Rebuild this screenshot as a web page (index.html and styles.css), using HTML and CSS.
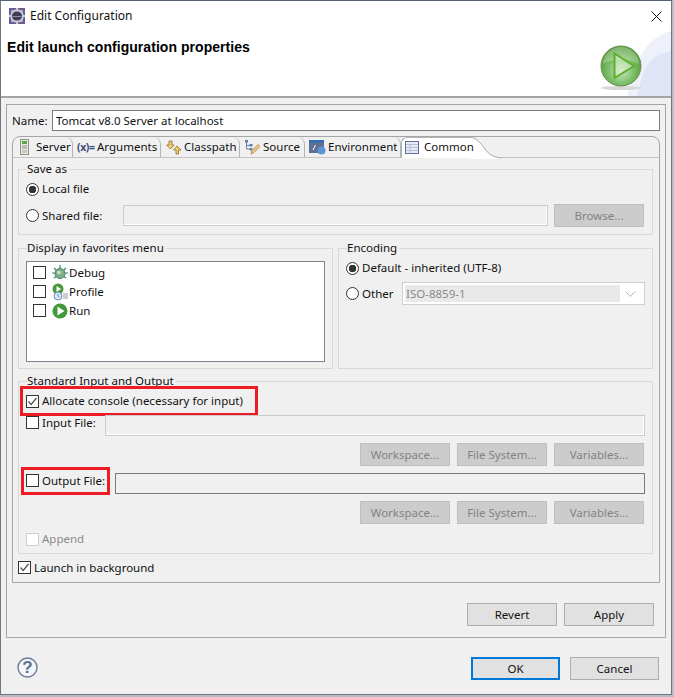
FILE: index.html
```html
<!DOCTYPE html>
<html lang="en">
<head>
<meta charset="utf-8">
<title>Edit Configuration</title>
<link rel="stylesheet" href="styles.css">
</head>
<body>
<svg class="defs" width="0" height="0" aria-hidden="true">
  <defs>
    <radialGradient id="orb" cx="50%" cy="62%" r="58%">
      <stop offset="0" stop-color="#cfe8c4"/>
      <stop offset=".55" stop-color="#7dc06a"/>
      <stop offset="1" stop-color="#4f9a35"/>
    </radialGradient>
    <symbol id="check" viewBox="0 0 13 13">
      <path d="M2.500 6.500 5.200 9.500 10.500 3" fill="none" stroke="#555" stroke-width="1.300"/>
    </symbol>
  </defs>
</svg>
<div class="window">
  <header class="header">
    <svg class="header-art" width="60" height="67" viewBox="0 0 60 67" aria-hidden="true">
      <path d="M60 2C44 6 34 18 28 30 24 42 20 56 16 67H60Z" fill="#eef1fa"/>
      <path d="M60 22C48 24 40 30 34 40 30 50 28 58 26 67H60Z" fill="#dfe5f6"/>
    </svg>
    <svg class="header-orb" width="44" height="48" viewBox="0 0 44 48" aria-hidden="true">
      <ellipse cx="22" cy="44" rx="20" ry="2" fill="#d8d8d8"/>
      <circle cx="22" cy="22" r="20" fill="url(#orb)" stroke="#6d8f50" stroke-width="1"/>
      <path d="M4 20A18 17 0 0 1 40 20C30 14 14 14 4 20Z" fill="#ffffff" opacity=".28"/>
      <path d="M15.500 9.500 35 22 15.500 34Z" fill="#dcf0d0" fill-opacity=".55" stroke="#5fae2c" stroke-width="2"/>
    </svg>
    <div class="titlebar">
      <svg class="app-icon" width="16" height="16" viewBox="0 0 16 16" aria-hidden="true">
        <rect width="16" height="16" fill="#6a5a96"/>
        <circle cx="8" cy="8" r="6.800" fill="#c9c9d2"/>
        <path d="M8 0v3M8 13v3M0 8h3M13 8h3M2.500 2.500l2 2M11.500 11.500l2 2M13.500 2.500l-2 2M4.500 11.500l-2 2" stroke="#c9c9d2" stroke-width="2"/>
        <ellipse cx="8" cy="8" rx="5" ry="4.600" fill="#3f3a56"/>
        <path d="M3.500 8.500h9" stroke="#8f8aa8" stroke-width="1"/>
      </svg>
      <span class="title">Edit Configuration</span>
      <svg class="close" width="11" height="11" viewBox="0 0 11 11" aria-hidden="true">
        <path d="M.5.500l10 10M10.500.500l-10 10" stroke="#111" stroke-width="1"/>
      </svg>
    </div>
    <h1 class="heading">Edit launch configuration properties</h1>
  </header>

  <main class="box">
    <div class="name-row">
      <label class="name-label">Name:</label>
      <div class="field field-name">Tomcat v8.0 Server at localhost</div>
    </div>

    <section class="folder">
      <nav class="tabs">
        <div class="tab tab-server">
          <svg width="9" height="16" viewBox="0 0 9 16" aria-hidden="true">
            <rect x=".5" y=".5" width="8" height="15" fill="#e6e8e0" stroke="#8d9488"/>
            <rect x="2" y="2" width="5" height="3" fill="#5aa845"/>
            <path d="M2 7h5M2 9h5" stroke="#8d9488"/>
            <rect x="2" y="11" width="5" height="3" fill="#c8ccc0"/>
          </svg>
          <span>Server</span>
        </div>
        <div class="tab tab-args"><b class="var-icon">(x)=</b><span>Arguments</span></div>
        <div class="tab tab-class">
          <svg width="16" height="15" viewBox="0 0 16 15" aria-hidden="true">
            <path d="M4 1h3v4h2L5.500 9 1.500 5h2.500Z" fill="#f3cf6a" stroke="#8a7030" stroke-width=".8"/>
            <path d="M11 14V10H8.500L12 6l4 4h-2.500v4Z" fill="#f3cf6a" stroke="#8a7030" stroke-width=".8"/>
          </svg>
          <span>Classpath</span>
        </div>
        <div class="tab tab-source">
          <svg width="16" height="16" viewBox="0 0 16 16" aria-hidden="true">
            <path d="M2.500 3v7h3M2.500 6.500h3" fill="none" stroke="#6a7fa8"/>
            <path d="M1 1h3v2.500H1ZM5.500 5h3v2.500h-3ZM5.500 9h3v2.500h-3Z" fill="#5f7fb5"/>
            <path d="M7 15l1-3.500L14 5.500l2 2L10 13.500Z" fill="#e8c98a" stroke="#a8833c" stroke-width=".8"/>
          </svg>
          <span>Source</span>
        </div>
        <div class="tab tab-env">
          <svg width="17" height="15" viewBox="0 0 17 15" aria-hidden="true">
            <rect width="15" height="13" fill="#5c7193"/>
            <rect y="0" width="15" height="2.500" fill="#2f6db5"/>
            <path d="M4 10l2.500-5" stroke="#fff"/>
            <circle cx="12.500" cy="10.500" r="4" fill="#5d94d4"/>
          </svg>
          <span>Environment</span>
        </div>
        <div class="tab tab-common">
          <svg width="14" height="13" viewBox="0 0 14 13" aria-hidden="true">
            <rect x=".5" y=".5" width="13" height="12" fill="#e8eaf4" stroke="#5c6f97"/>
            <path d="M1 3.500h12M1 6.500h12M1 9.500h12M5 3.500v9" stroke="#b8c0d8"/>
          </svg>
          <span class="tab-label">Common</span>
          <svg class="tab-curve" width="31" height="22" viewBox="0 0 31 22" aria-hidden="true">
            <path d="M0 0C6 0 10 5 15 12 19 18 24 20 31 21V22H0Z" fill="#fff"/>
            <path d="M0 .5C6 .5 10 5 15 12 19 18 24 20 31 21" fill="none" stroke="#a8a8a8"/>
          </svg>
        </div>
      </nav>

      <div class="panel">
        <div class="group group-save">
          <span class="legend">Save as</span>
          <div class="row row-local">
            <span class="opt"><i class="radio on"></i>Local file</span>
          </div>
          <div class="row row-shared">
            <span class="opt opt-shared"><i class="radio"></i>Shared file:</span>
            <div class="field disabled grow"></div>
            <button class="btn off">Browse...</button>
          </div>
        </div>

        <div class="columns">
          <div class="group group-half">
            <span class="legend">Display in favorites menu</span>
            <div class="list">
              <div class="list-row">
                <i class="check"></i>
                <svg width="16" height="16" viewBox="0 0 16 16" aria-hidden="true">
                  <path d="M2 3l3 3M14 3l-3 3M0 8h3M13 8h3M2 13l3-2M14 13l-3-2M8 0v3" stroke="#3f7f6a" stroke-width="1.200"/>
                  <circle cx="8" cy="8.500" r="5" fill="#7fb08c" stroke="#3f7f6a"/>
                  <circle cx="7" cy="7.500" r="1.800" fill="#cfe6c8"/>
                </svg>
                <span>Debug</span>
              </div>
              <div class="list-row">
                <i class="check"></i>
                <svg width="16" height="18" viewBox="0 0 16 18" aria-hidden="true">
                  <circle cx="6" cy="6" r="5.500" fill="#4a9a3c"/>
                  <path d="M4.500 3 9 6 4.500 9Z" fill="#fff"/>
                  <circle cx="6" cy="13" r="4" fill="#dbe6f5" stroke="#6a8fc0"/>
                  <path d="M6 11v2l1.500 1" stroke="#6a8fc0" fill="none"/>
                  <path d="M11 11h5M11 13h5M11 15h5" stroke="#8f9fb5"/>
                </svg>
                <span>Profile</span>
              </div>
              <div class="list-row">
                <i class="check"></i>
                <svg width="16" height="16" viewBox="0 0 16 16" aria-hidden="true">
                  <circle cx="8" cy="8" r="7.500" fill="#3f9a3a"/>
                  <path d="M5.500 3.500 12.500 8 5.500 12.500Z" fill="#fff"/>
                </svg>
                <span>Run</span>
              </div>
            </div>
          </div>

          <div class="group group-half">
            <span class="legend">Encoding</span>
            <div class="row row-local">
              <span class="opt"><i class="radio on"></i>Default - inherited (UTF-8)</span>
            </div>
            <div class="row row-other">
              <span class="opt opt-other"><i class="radio"></i>Other</span>
              <div class="select">
                <span class="select-value">ISO-8859-1</span>
                <svg width="11" height="6" viewBox="0 0 11 6" aria-hidden="true">
                  <path d="M.5.500 5.500 5.500 10.500.500" fill="none" stroke="#b0b0b0"/>
                </svg>
              </div>
            </div>
          </div>
        </div>

        <div class="group group-io">
          <span class="legend">Standard Input and Output</span>
          <div class="row row-local">
            <span class="opt"><i class="check"><svg width="13" height="13"><use href="#check"/></svg></i>Allocate console (necessary for input)</span>
            <span class="mark mark-alloc"></span>
          </div>
          <div class="row row-file row-input">
            <span class="opt opt-input"><i class="check"></i>Input File:</span>
            <div class="field disabled grow"></div>
          </div>
          <div class="btn-row">
            <button class="btn off">Workspace...</button>
            <button class="btn off">File System...</button>
            <button class="btn off">Variables...</button>
          </div>
          <div class="row row-file row-output">
            <span class="opt opt-output"><i class="check"></i>Output File:</span>
            <span class="mark mark-out"></span>
            <div class="field dark grow"></div>
          </div>
          <div class="btn-row">
            <button class="btn off">Workspace...</button>
            <button class="btn off">File System...</button>
            <button class="btn off">Variables...</button>
          </div>
          <div class="row row-append">
            <span class="opt muted"><i class="check faint"></i>Append</span>
          </div>
        </div>

        <div class="row row-launch">
          <span class="opt"><i class="check"><svg width="13" height="13"><use href="#check"/></svg></i>Launch in background</span>
        </div>
      </div>
    </section>

    <div class="actions">
      <button class="btn">Revert</button>
      <button class="btn">Apply</button>
    </div>
  </main>

  <footer class="footer">
    <svg class="help" width="21" height="21" viewBox="0 0 21 21" aria-hidden="true">
      <circle cx="10.500" cy="10.500" r="9.500" fill="#f4f5f8" stroke="#6b7a99" stroke-width="1.400"/>
    </svg>
    <span class="help-mark">?</span>
    <button class="btn wide primary">OK</button>
    <button class="btn wide">Cancel</button>
  </footer>
</div>
</body>
</html>
```

FILE: styles.css
```css
* { box-sizing: border-box; }
html, body { margin: 0; padding: 0; }
body {
  width: 674px;
  height: 697px;
  overflow: hidden;
  background: #b9bdc3;
  font-family: "Noto Sans", "Liberation Sans", sans-serif;
  font-size: 11.5px;
  line-height: 16px;
  color: #111;
}
.defs { position: absolute; }
.window {
  width: 672px;
  height: 695px;
  background: #f0f0f0;
  border: 1px solid #6f7780;
  border-top-color: #566270;
}
.header {
  position: relative;
  height: 97px;
  background: #fff;
  border-bottom: 2px solid #a4a4a4;
}
.header-art { position: absolute; right: 0; bottom: 0; }
.header-orb { position: absolute; right: 28px; top: 43px; }
.titlebar {
  display: flex;
  align-items: center;
  height: 30px;
  padding: 0 9px 0 8px;
}
.app-icon { flex: none; }
.title { margin-left: 5px; flex: 1; font-size: 12px; }
.close { flex: none; }
.heading {
  margin: 7px 0 0 6px;
  font-size: 14px;
  line-height: 18px;
  font-weight: 700;
  letter-spacing: .05px;
  color: #000;
  font-family: "Liberation Sans", sans-serif;
}

.box {
  width: 660px;
  height: 534px;
  margin: 6px 0 0 5px;
  padding: 5px 5px 0;
  border: 1px solid #a6a6a6;
}
.name-row { display: flex; align-items: center; height: 21px; }
.name-label { width: 40px; }
.field {
  background: #fff;
  border: 1px solid #7a7a7a;
  height: 21px;
  line-height: 19px;
  padding-left: 3px;
}
.field-name { width: 608px; }
.field.disabled {
  background: #f0f0f0;
  border-color: #cbcbcb;
  box-shadow: inset -1px -1px 0 #fff;
}
.field.dark { background: #f0f0f0; }
.grow { flex: 1; }

.folder {
  width: 648px;
  height: 447px;
  margin-top: 5px;
  border: 1px solid #a6a6a6;
  border-top-left-radius: 8px;
  border-top-right-radius: 8px;
}
.tabs {
  display: flex;
  height: 21px;
  border-bottom: 1px solid #c4c4c4;
}
.tab {
  display: flex;
  flex: none;
  align-items: center;
  height: 20px;
  border-right: 1px solid #b4b4b4;
  border-top-right-radius: 7px;
}
.tab svg { flex: none; }
.tab-server { width: 60px; padding-left: 7px; gap: 7px; }
.tab-args { width: 88px; padding-left: 4px; gap: 3px; }
.tab-class { width: 79px; padding-left: 4px; gap: 3px; }
.tab-source { width: 65px; padding-left: 4px; gap: 3px; }
.tab-env { width: 96px; padding-left: 4px; gap: 2px; }
.tab-common {
  position: relative;
  width: 69px;
  height: 21px;
  margin-bottom: -1px;
  padding: 0 0 2px 3px;
  gap: 5px;
  background: #fff;
  border-right: 0;
  border-top-right-radius: 0;
  border-top-left-radius: 6px;
  border-left: 1px solid #b4b4b4;
  border-top: 1px solid #b4b4b4;
}
.tab-label { position: relative; z-index: 1; }
.tab-curve { position: absolute; left: 68px; top: -1px; }
.var-icon { width: 17px; font-size: 10.5px; color: #3a4a78; letter-spacing: -.4px; white-space: nowrap; }

.panel { padding: 11px 6px 0 5px; }
.group {
  border: 1px solid #d9d9d9;
  padding: 0 8px 0 7px;
}
.legend {
  display: table;
  height: 16px;
  margin: -9px 0 0 1px;
  padding: 0 2px 0 0;
  background: #f0f0f0;
}
.group-save { height: 66px; }
.columns { display: flex; gap: 5px; margin-top: 13px; }
.group-half { width: 315px; height: 121px; }
.group-io { height: 173px; margin-top: 12px; padding-right: 7px; }

.row { position: relative; display: flex; align-items: center; }
.row-local { height: 20px; margin-top: 2px; }
.row-shared { height: 23px; margin-top: 5px; }
.row-shared .btn { margin-left: 6px; }
.row-other { height: 23px; margin-top: 4px; }
.row-file { align-items: flex-start; margin-top: 4px; }
.row-output { margin-top: 7px; }
.row-append { height: 18px; margin-top: 6px; }
.row-launch { height: 17px; margin-top: 5px; }

.opt { display: flex; flex: none; align-items: center; gap: 3px; white-space: nowrap; height: 15px; }
.opt-shared { width: 97px; }
.opt-other { width: 56px; }
.opt-input { width: 79px; }
.opt-output { width: 89px; }
.muted { color: #8a8a8a; }

.radio {
  flex: none;
  width: 13px;
  height: 13px;
  border: 1px solid #333;
  border-radius: 50%;
  background: #fff;
}
.radio.on { background: radial-gradient(circle, #333 0 3.5px, #fff 4px); }
.check {
  flex: none;
  display: block;
  width: 13px;
  height: 13px;
  border: 1px solid #333;
  background: #fff;
  font-style: normal;
}
.check svg { display: block; margin: -1px; }
.check.faint { border-color: #cfcfcf; }

.mark { position: absolute; border: 3px solid #ed1c24; pointer-events: none; }
.mark-alloc { left: -6px; top: -5px; width: 238px; height: 30px; }
.mark-out { left: -5px; top: -6px; width: 89px; height: 28px; }

.list {
  width: 299px;
  height: 101px;
  margin-top: 5px;
  padding: 1px 0 0 6px;
  background: #fff;
  border: 1px solid #7f8590;
}
.list-row { display: flex; align-items: center; height: 19px; gap: 6px; }
.list-row svg { margin-right: -5px; }

.select {
  display: flex;
  flex: none;
  align-items: center;
  width: 243px;
  height: 23px;
  padding: 2px 8px 2px 2px;
  background: #fff;
  border: 1px solid #cfcfcf;
}
.select-value {
  width: 220px;
  height: 17px;
  line-height: 17px;
  margin-right: 5px;
  padding-left: 1px;
  background: #e9e9e9;
  color: #8a8a8a;
}

.btn {
  width: 90px;
  height: 23px;
  padding: 0;
  font: inherit;
  color: #111;
  background: #e1e1e1;
  border: 1px solid #adadad;
}
.btn.off { flex: none; background: #cccccc; border-color: #bfbfbf; color: #838383; }
.btn.primary { border: 2px solid #0078d7; }
.btn-row { display: flex; justify-content: flex-end; gap: 7px; margin: 7px 1px 0 0; }

.actions { display: flex; justify-content: flex-end; gap: 7px; margin-top: 20px; padding-right: 6px; }

.footer {
  position: relative;
  display: flex;
  align-items: center;
  height: 23px;
  margin-top: 19px;
  padding: 0 12px 0 16px;
}
.help { flex: none; margin-top: -2px; }
.help-mark {
  position: absolute;
  left: 21px;
  top: 1px;
  width: 11px;
  text-align: center;
  font: 700 17px/20px "Liberation Sans", sans-serif;
  color: #5f6f8f;
}
.btn.wide { width: 89px; }
.btn.primary { margin-left: auto; }
.btn.wide + .btn.wide { margin-left: 10px; }
```
